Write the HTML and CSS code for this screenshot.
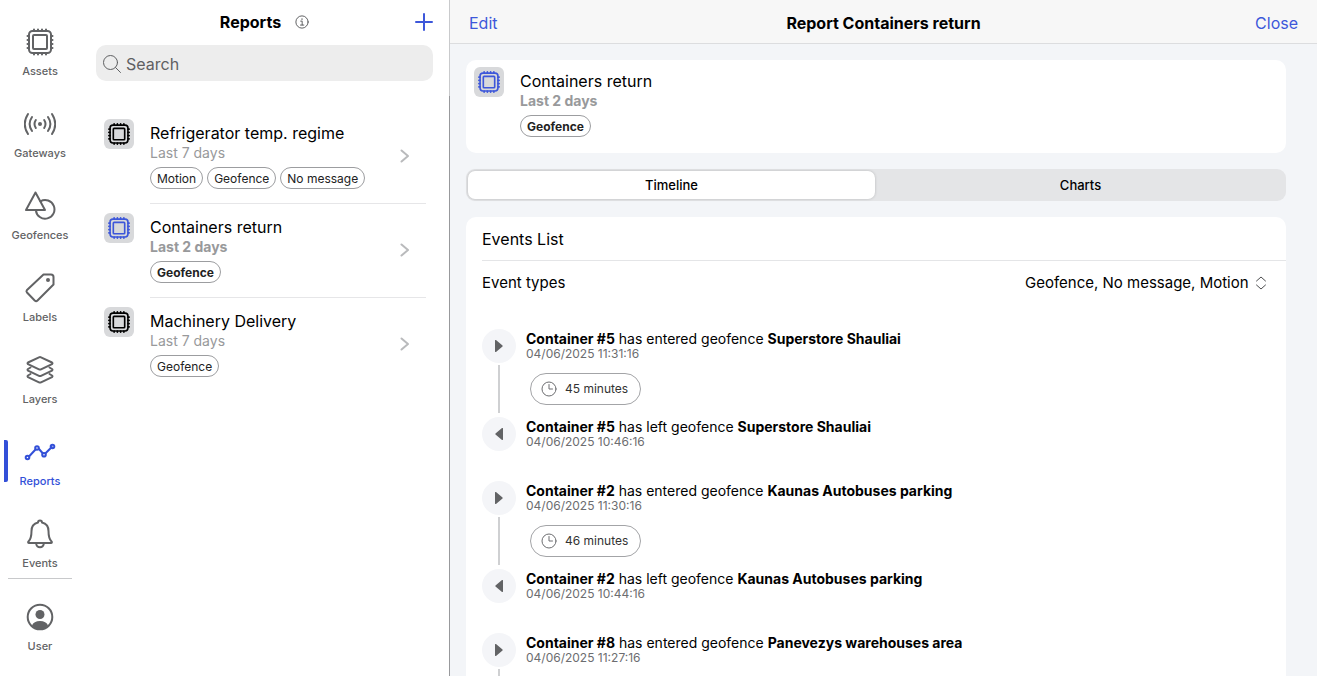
FILE: index.html
```
<!DOCTYPE html>
<html lang="en">
<head>
    <meta charset="UTF-8">
    <meta name="viewport" content="width=device-width, initial-scale=1.0">
    <title>Reports</title>
    <link rel="stylesheet" href="styles.css">
</head>
<body>

<!-- Shared icons -->
<svg class="sprite" aria-hidden="true">
    <symbol id="chip" viewBox="0 0 32 32">
        <rect x="5" y="5" width="22" height="22" rx="3.500"/>
        <rect x="9" y="9" width="14" height="14" rx="1"/>
        <path d="M10 5V3.500M14 5V3.500M18 5V3.500M22 5V3.500M10 27v1.500M14 27v1.500M18 27v1.500M22 27v1.500M5 10H3.500M5 14H3.500M5 18H3.500M5 22H3.500M27 10h1.500M27 14h1.500M27 18h1.500M27 22h1.500"/>
    </symbol>
    <symbol id="chevron" viewBox="0 0 10 16">
        <path d="M1.500 2.500l6.500 5.500-6.500 5.500"/>
    </symbol>
    <symbol id="clock" viewBox="0 0 16 16">
        <circle cx="8" cy="8" r="7"/>
        <path d="M8 3.500V8h3.500"/>
    </symbol>
    <symbol id="enter" viewBox="0 0 10 14">
        <path d="M1 1.500v11a.6.6 0 0 0 1 .4l6.500-5.400a.7.7 0 0 0 0-1L2 1.100a.6.6 0 0 0-1 .4z"/>
    </symbol>
    <symbol id="leave" viewBox="0 0 10 14">
        <path d="M9 1.500v11a.6.6 0 0 1-1 .4L1.500 7.500a.7.7 0 0 1 0-1L8 1.100a.6.6 0 0 1 1 .4z"/>
    </symbol>
</svg>

<div class="app">
    <nav class="sidebar">
        <a class="nav-item" href="#assets">
            <svg class="nav-icon"><use href="#chip"/></svg>
            <span>Assets</span>
        </a>
        <a class="nav-item" href="#gateways">
            <svg class="nav-icon" viewBox="0 0 32 32">
                <circle class="solid" cx="16" cy="16" r="2"/>
                <path d="M11.800 12q-2.600 4 0 8M20.200 12q2.600 4 0 8M8 9q-4.800 7 0 14M24 9q4.800 7 0 14M4 6q-6.500 10 0 20M28 6q6.500 10 0 20"/>
            </svg>
            <span>Gateways</span>
        </a>
        <a class="nav-item" href="#geofences">
            <svg class="nav-icon" viewBox="0 0 32 32">
                <path d="M11.500 2.500L2 20h19z"/>
                <path d="M16.500 11.300a9.300 9.300 0 1 1-4.600 9"/>
            </svg>
            <span>Geofences</span>
        </a>
        <a class="nav-item" href="#labels">
            <svg class="nav-icon" viewBox="0 0 32 32">
                <path d="M19.500 2.500h7.500a2.500 2.500 0 0 1 2.500 2.500v7.500L13.500 28.500a2 2 0 0 1-2.800 0L3 20.500a2 2 0 0 1 0-2.600z"/>
                <circle class="solid" cx="24" cy="8" r="2"/>
            </svg>
            <span>Labels</span>
        </a>
        <a class="nav-item" href="#layers">
            <svg class="nav-icon" viewBox="0 0 32 32">
                <path d="M15 3.300L4 8.500q-1 .8 0 1.600l11 5.200q1 .5 2 0l11-5.200q1-.8 0-1.600L17 3.300q-1-.5-2 0z"/>
                <path d="M6.500 13.500L4 15q-1 .8 0 1.600l11 5.200q1 .5 2 0l11-5.200q1-.8 0-1.600l-2.500-1.500"/>
                <path d="M6.500 20L4 21.500q-1 .8 0 1.600l11 5.200q1 .5 2 0l11-5.200q1-.8 0-1.600L25.500 20"/>
            </svg>
            <span>Layers</span>
        </a>
        <a class="nav-item active" href="#reports">
            <svg class="nav-icon" viewBox="0 0 32 32">
                <path d="M5 20.500l6.500-7M15 13l3.500 4M21.800 17l6-6"/>
                <circle cx="3.500" cy="21.500" r="1.800"/>
                <circle cx="13" cy="12" r="1.800"/>
                <circle cx="20" cy="18.700" r="1.800"/>
                <circle cx="28.500" cy="10.500" r="1.800"/>
            </svg>
            <span>Reports</span>
        </a>
        <a class="nav-item" href="#events">
            <svg class="nav-icon" viewBox="0 0 32 32">
                <path d="M14 4.500a2 2 0 0 1 4 0c4 1 6.500 4 6.500 8.500 0 6 .5 8 3 10.500.8.900.3 1.500-.5 1.500H5c-.8 0-1.300-.6-.5-1.500 2.500-2.500 3-4.500 3-10.500 0-4.500 2.500-7.500 6.500-8.500z"/>
                <path d="M12.200 25.500a3.800 3.800 0 0 0 7.600 0"/>
            </svg>
            <span>Events</span>
        </a>
        <hr class="nav-divider">
        <a class="nav-item" href="#user">
            <svg class="nav-icon" viewBox="0 0 32 32">
                <circle cx="16" cy="16" r="12.300"/>
                <circle class="solid" cx="16" cy="13.500" r="4.500"/>
                <path class="solid" d="M8 24.500c1-3 4-4.500 8-4.500s7 1.500 8 4.500c-2 2.500-5 3.800-8 3.800s-6-1.300-8-3.800z"/>
            </svg>
            <span>User</span>
        </a>
    </nav>

    <section class="reports">
        <div class="reports-top">
            <header class="reports-header">
                <h1>Reports</h1>
                <button class="info" type="button" aria-label="About reports">
                    <svg viewBox="0 0 16 16"><circle cx="8" cy="8" r="7"/><path d="M6.500 7h1.700v4.300M6.300 11.500h3.800M8 4.200v1.200"/></svg>
                </button>
                <button class="add" type="button" aria-label="Add report">
                    <svg viewBox="0 0 18 18"><path d="M9 1v16M1 9h16"/></svg>
                </button>
            </header>
            <div class="search">
                <svg viewBox="0 0 20 20"><circle cx="8.500" cy="8.500" r="7"/><path d="M13.500 13.500l5 5"/></svg>
                <input type="search" placeholder="Search" aria-label="Search reports">
            </div>
        </div>

        <div class="report-list">
            <a class="report" href="#refrigerator">
                <span class="badge"><svg><use href="#chip"/></svg></span>
                <div class="report-body">
                    <div class="report-info">
                        <h2>Refrigerator temp. regime</h2>
                        <p class="period">Last 7 days</p>
                        <div class="tags"><span class="tag">Motion</span><span class="tag">Geofence</span><span class="tag">No message</span></div>
                    </div>
                    <svg class="chevron"><use href="#chevron"/></svg>
                </div>
            </a>
            <a class="report selected" href="#containers">
                <span class="badge"><svg><use href="#chip"/></svg></span>
                <div class="report-body">
                    <div class="report-info">
                        <h2>Containers return</h2>
                        <p class="period">Last 2 days</p>
                        <div class="tags"><span class="tag">Geofence</span></div>
                    </div>
                    <svg class="chevron"><use href="#chevron"/></svg>
                </div>
            </a>
            <a class="report" href="#machinery">
                <span class="badge"><svg><use href="#chip"/></svg></span>
                <div class="report-body">
                    <div class="report-info">
                        <h2>Machinery Delivery</h2>
                        <p class="period">Last 7 days</p>
                        <div class="tags"><span class="tag">Geofence</span></div>
                    </div>
                    <svg class="chevron"><use href="#chevron"/></svg>
                </div>
            </a>
        </div>
    </section>

    <main class="detail">
        <header class="detail-header">
            <button type="button">Edit</button>
            <h1>Report Containers return</h1>
            <button type="button">Close</button>
        </header>

        <div class="detail-content">
            <div class="card summary selected">
                <span class="badge"><svg><use href="#chip"/></svg></span>
                <div class="report-info">
                    <h2>Containers return</h2>
                    <p class="period">Last 2 days</p>
                    <div class="tags"><span class="tag">Geofence</span></div>
                </div>
            </div>

            <div class="segment" role="tablist">
                <button class="current" type="button" role="tab" aria-selected="true">Timeline</button>
                <button type="button" role="tab" aria-selected="false">Charts</button>
            </div>

            <div class="card events">
                <h2 class="events-title">Events List</h2>
                <div class="filter">
                    <label for="event_types">Event types</label>
                    <select id="event_types">
                        <option>Geofence, No message, Motion</option>
                    </select>
                    <svg viewBox="0 0 12 14"><path d="M1.500 5L6 1l4.500 4M1.500 9L6 13l4.500-4"/></svg>
                </div>

                <ul class="timeline">
                    <li class="event entered">
                        <div class="track"><span class="dot"><svg><use href="#enter"/></svg></span></div>
                        <div class="event-body">
                            <p><b>Container #5</b> has entered geofence <b>Superstore Shauliai</b></p>
                            <time>04/06/2025 11:31:16</time>
                            <span class="duration"><svg><use href="#clock"/></svg>45 minutes</span>
                        </div>
                    </li>
                    <li class="event">
                        <div class="track"><span class="dot"><svg><use href="#leave"/></svg></span></div>
                        <div class="event-body">
                            <p><b>Container #5</b> has left geofence <b>Superstore Shauliai</b></p>
                            <time>04/06/2025 10:46:16</time>
                        </div>
                    </li>
                    <li class="event entered">
                        <div class="track"><span class="dot"><svg><use href="#enter"/></svg></span></div>
                        <div class="event-body">
                            <p><b>Container #2</b> has entered geofence <b>Kaunas Autobuses parking</b></p>
                            <time>04/06/2025 11:30:16</time>
                            <span class="duration"><svg><use href="#clock"/></svg>46 minutes</span>
                        </div>
                    </li>
                    <li class="event">
                        <div class="track"><span class="dot"><svg><use href="#leave"/></svg></span></div>
                        <div class="event-body">
                            <p><b>Container #2</b> has left geofence <b>Kaunas Autobuses parking</b></p>
                            <time>04/06/2025 10:44:16</time>
                        </div>
                    </li>
                    <li class="event entered">
                        <div class="track"><span class="dot"><svg><use href="#enter"/></svg></span></div>
                        <div class="event-body">
                            <p><b>Container #8</b> has entered geofence <b>Panevezys warehouses area</b></p>
                            <time>04/06/2025 11:27:16</time>
                        </div>
                    </li>
                </ul>
            </div>
        </div>
    </main>
</div>

</body>
</html>
```
FILE: styles.css
```
* {
    box-sizing: border-box;
}
body {
    margin: 0;
    font-family: Inter, sans-serif;
    font-size: 16px;
    line-height: 20px;
    color: #000;
    background-color: #fff;
}
h1, h2, p, ul {
    margin: 0;
    padding: 0;
    font-size: 16px;
    font-weight: 400;
}
h1 {
    font-weight: 700;
}
a {
    color: inherit;
    text-decoration: none;
}
button {
    padding: 0;
    border: 0;
    background: none;
    font: inherit;
    color: inherit;
    cursor: pointer;
}
svg {
    display: block;
    flex: none;
    fill: none;
    stroke: currentColor;
    stroke-linecap: round;
    stroke-linejoin: round;
}
.sprite {
    position: absolute;
    width: 0;
    height: 0;
}
.solid {
    fill: currentColor;
    stroke: none;
}
.app {
    display: flex;
    height: 100vh;
    overflow: hidden;
}

/* Sidebar */
.sidebar {
    flex: none;
    width: 80px;
    padding-top: 11px;
}
.nav-item {
    position: relative;
    display: flex;
    flex-direction: column;
    align-items: center;
    gap: 6px;
    padding: 15px 0;
    font-size: 11px;
    font-weight: 500;
    line-height: 14px;
    color: #626365;
}
.nav-icon {
    width: 32px;
    height: 32px;
    stroke-width: 2;
}
.nav-item.active {
    color: #3350d8;
}
.nav-item.active::before {
    content: "";
    position: absolute;
    left: 4px;
    top: 19px;
    width: 4px;
    height: 42px;
    border-radius: 0 2px 2px 0;
    background-color: #3350d8;
}
.nav-divider {
    height: 1px;
    margin: -7px 8px 7px;
    border: 0;
    background-color: #c8c9cb;
}

/* Reports list */
.reports {
    display: flex;
    flex-direction: column;
    flex: none;
    width: 370px;
}
.reports-top {
    padding: 0 16px 15px;
    border-right: 1px solid #c9cacc;
}
.reports-header {
    display: grid;
    grid-template-columns: 1fr auto auto 1fr;
    align-items: center;
    column-gap: 14px;
    height: 45px;
    padding-bottom: 1px;
}
.reports-header h1 {
    grid-column: 2;
}
.info svg {
    width: 14px;
    height: 14px;
    color: #4c4d4f;
}
.add {
    justify-self: end;
    color: #3d57da;
}
.add svg {
    width: 18px;
    height: 18px;
    stroke-width: 2;
}
.search {
    display: flex;
    align-items: center;
    gap: 4px;
    height: 36px;
    padding: 1px 6px 0;
    border-radius: 10px;
    background-color: #ededed;
    color: #5f6062;
}
.search svg {
    width: 20px;
    height: 20px;
}
.search input {
    flex: 1;
    min-width: 0;
    padding: 0;
    border: 0;
    outline: none;
    background: none;
    font: inherit;
}
.search input::placeholder {
    color: #5f6062;
}
.report-list {
    flex: 1;
    padding: 14px 23px 0 24px;
    border-right: 1px solid #98999c;
}
.report {
    display: flex;
    gap: 16px;
}
.badge {
    flex: none;
    width: 30px;
    height: 30px;
    padding: 2px;
    margin-top: 9px;
    border-radius: 6px;
    background-color: #d8d9db;
}
.badge svg {
    width: 26px;
    height: 26px;
    stroke-width: 2;
}
.selected .badge {
    color: #3d57da;
}
.report-body {
    display: flex;
    flex: 1;
    align-items: center;
    justify-content: space-between;
    padding: 13px 16px 14px 0;
    border-bottom: 1px solid #e6e6e8;
}
.report:last-child .report-body {
    border-bottom: 0;
}
.period {
    font-size: 14px;
    color: #98999b;
}
.selected .period {
    font-weight: 700;
}
.tags {
    display: flex;
    gap: 4px;
    margin-top: 4px;
}
.tag {
    height: 22px;
    padding: 0 6px;
    border: 1px solid #9c9da0;
    border-radius: 11px;
    font-size: 12px;
    line-height: 21px;
    color: #222;
}
.selected .tag {
    font-weight: 700;
}
.chevron {
    width: 10px;
    height: 16px;
    stroke-width: 2;
    color: #b9babc;
}

/* Report detail */
.detail {
    display: flex;
    flex-direction: column;
    flex: 1;
    min-width: 0;
    background-color: #f3f5f8;
}
.detail-header {
    display: grid;
    grid-template-columns: 1fr auto 1fr;
    align-items: center;
    flex: none;
    height: 44px;
    padding: 2px 19px 0;
    border-bottom: 1px solid #dcdddf;
    background-color: #f7f7f7;
}
.detail-header button {
    justify-self: start;
    color: #3d57da;
}
.detail-header button:last-child {
    justify-self: end;
}
.detail-content {
    flex: 1;
    min-height: 0;
    padding: 16px 31px 0 16px;
    overflow: hidden;
}
.card {
    border-radius: 10px;
    background-color: #fff;
}
.summary {
    display: flex;
    gap: 16px;
    padding: 0 8px 16px;
}
.summary .badge {
    margin-top: 7px;
}
.summary .report-info {
    padding-top: 11px;
}
.segment {
    display: flex;
    gap: 2px;
    height: 32px;
    margin: 16px 0;
    padding: 2px;
    border-radius: 9px;
    background-color: #e4e5e7;
}
.segment button {
    flex: 1;
    border-radius: 7px;
    font-size: 13px;
    font-weight: 500;
}
.segment .current {
    background-color: #fff;
    box-shadow: 0 0 3px rgba(0, 0, 0, 0.2);
}
.events {
    padding-left: 16px;
}
.events-title, .filter {
    height: 44px;
    line-height: 44px;
}
.events-title {
    border-bottom: 1px solid #e4e5e7;
    font-size: 16px;
}
.filter {
    display: flex;
    align-items: center;
    gap: 6px;
    padding-right: 19px;
    font-size: 15px;
}
.filter select {
    margin-left: auto;
    padding: 0;
    border: 0;
    appearance: none;
    background: none;
    font: inherit;
    color: inherit;
}
.filter svg {
    width: 12px;
    height: 14px;
    color: #4c4d4f;
}
.timeline {
    padding-top: 24px;
    list-style: none;
}
.event {
    display: flex;
    gap: 10px;
    min-height: 64px;
}
.event.entered {
    min-height: 88px;
}
.track {
    display: flex;
    flex-direction: column;
    align-items: center;
    gap: 2px;
}
.dot {
    display: flex;
    align-items: center;
    justify-content: center;
    width: 34px;
    height: 34px;
    border-radius: 50%;
    background-color: #f4f5f8;
    color: #626365;
}
.dot svg {
    width: 10px;
    height: 14px;
    fill: currentColor;
    stroke: none;
}
.entered .track::after {
    content: "";
    flex: 1;
    width: 2px;
    margin-bottom: 4px;
    background-color: #cfd0d2;
}
.event-body {
    display: flex;
    flex-direction: column;
    align-items: flex-start;
    padding-top: 2px;
}
.event-body p {
    font-size: 14px;
    line-height: 16px;
}
.event-body b {
    font-weight: 700;
}
.event-body time {
    font-size: 12px;
    line-height: 14px;
    color: #6c6d70;
}
.duration {
    display: flex;
    align-items: center;
    gap: 8px;
    height: 32px;
    margin: 12px 0 0 4px;
    padding: 0 12px 0 10px;
    border: 1px solid #a3a4a7;
    border-radius: 16px;
    font-size: 12px;
    color: #333;
}
.duration svg {
    width: 16px;
    height: 16px;
    color: #6c6d70;
}
```
